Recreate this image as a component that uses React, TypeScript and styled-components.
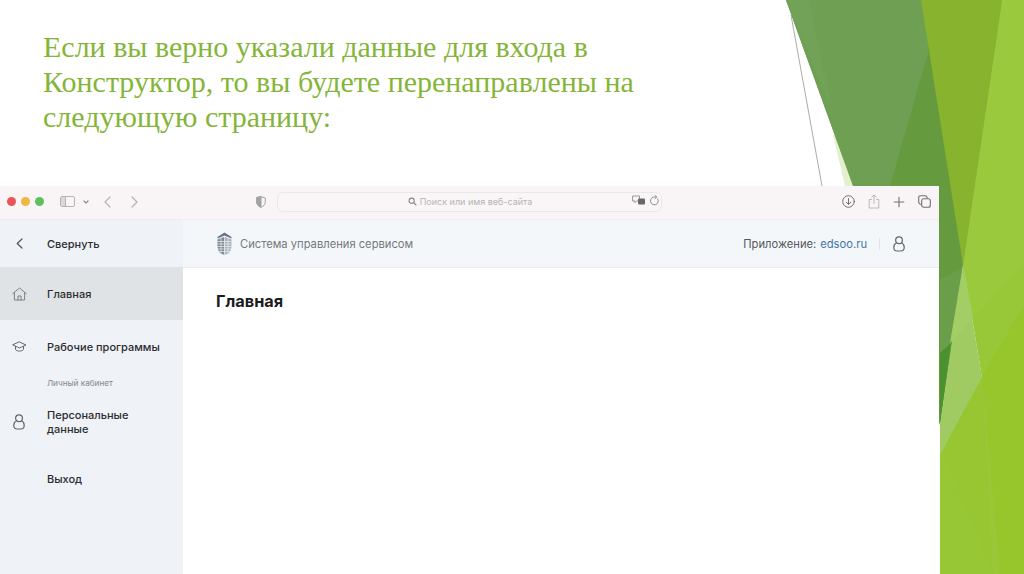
import React from "react";
import styled, { createGlobalStyle } from "styled-components";

const Global = createGlobalStyle`
  html, body { margin: 0; padding: 0; background: #fff; }
  #root { width: 1024px; height: 574px; overflow: hidden; }
`;

const Slide = styled.div`
  position: relative;
  width: 1024px;
  height: 574px;
  overflow: hidden;
  background: #fff;
  display: flex;
  flex-direction: column;
`;

const Decor = styled.svg`
  position: absolute;
  inset: 0;
  width: 1024px;
  height: 574px;
`;

const Heading = styled.h1`
  position: relative;
  box-sizing: border-box;
  margin: 0;
  height: 186px;
  width: 680px;
  padding: 29px 0 0 43px;
  font: 400 30px/35px "Liberation Serif", serif;
  color: #85b538;
`;

const BrowserWindow = styled.div`
  position: relative;
  width: 939px;
  height: 388px;
  display: flex;
  flex-direction: column;
  background: #fff;
  font-family: Inter, "Noto Sans", sans-serif;
`;

const Toolbar = styled.div`
  box-sizing: border-box;
  height: 34px;
  flex: none;
  display: flex;
  align-items: center;
  background: #f9f5f6;
  border-bottom: 1px solid #eceef0;
  padding: 0 0 2px 7px;
`;

const Lights = styled.div`
  display: flex;
  gap: 5px;
  margin-right: 16px;
`;

const Light = styled.span<{ $color: string }>`
  width: 9px;
  height: 9px;
  border-radius: 50%;
  background: ${(p) => p.$color};
`;

const ToolIcon = styled.svg<{ $ml?: number }>`
  flex: none;
  margin-left: ${(p) => p.$ml ?? 0}px;
  fill: none;
  stroke-linecap: round;
  stroke-linejoin: round;
`;

const AddressBar = styled.div`
  box-sizing: border-box;
  position: relative;
  width: 385px;
  height: 20px;
  margin-left: 11px;
  border: 1px solid #ebe8e9;
  border-radius: 6px;
  background: #faf6f7;
  display: flex;
  align-items: center;
  justify-content: center;
  gap: 3px;
  padding-left: 1px;
  font-size: 9px;
  color: #b4b4b6;
`;

const AddressTools = styled.div`
  position: absolute;
  right: 1px;
  top: 2px;
  display: flex;
  align-items: center;
  gap: 3px;
`;

const ToolbarRight = styled.div`
  margin-left: auto;
  margin-right: 8px;
  display: flex;
  align-items: center;
  gap: 13px;
`;

const Body = styled.div`
  flex: 1;
  display: flex;
  min-height: 0;
`;

const Sidebar = styled.nav`
  width: 183px;
  flex: none;
  background: #eff2f6;
  display: flex;
  flex-direction: column;
`;

const NavRow = styled.div<{ $h: number; $active?: boolean }>`
  height: ${(p) => p.$h}px;
  flex: none;
  display: flex;
  align-items: center;
  background: ${(p) => (p.$active ? "#dfe3e6" : "transparent")};
`;

const NavIconSlot = styled.div`
  width: 47px;
  flex: none;
  display: flex;
  justify-content: center;
  padding-right: 9px;
  box-sizing: border-box;
`;

const NavLabel = styled.span`
  font-size: 11px;
  line-height: 14px;
  font-weight: 500;
  color: #2b2d31;
`;

const SectionLabel = styled.div`
  height: 20px;
  flex: none;
  padding-left: 47px;
  font-size: 8.2px;
  line-height: 20px;
  color: #85888d;
`;

const Main = styled.main`
  flex: 1;
  display: flex;
  flex-direction: column;
`;

const TopBar = styled.header`
  box-sizing: border-box;
  height: 48px;
  flex: none;
  display: flex;
  align-items: center;
  padding: 0 34px 0 33px;
  background: #f4f7fa;
  border-bottom: 1px solid #e9ebee;
`;

const Brand = styled.span`
  margin-left: 7px;
  font-size: 11.2px;
  color: #76797d;
`;

const AppInfo = styled.div`
  margin-left: auto;
  display: flex;
  align-items: center;
  font-size: 11.2px;
  color: #55585c;
`;

const AppLink = styled.span`
  margin-left: 4px;
  color: #3f76a8;
`;

const Divider = styled.span`
  width: 1px;
  height: 12px;
  background: #dfe3e7;
  margin: 0 13px 0 12px;
`;

const PageTitle = styled.h2`
  margin: 24px 0 0 33px;
  font-size: 16.3px;
  line-height: 18px;
  font-weight: 700;
  color: #1b1c1e;
`;

const Person = ({ color = "#63666b" }: { color?: string }) => (
  <svg width="12" height="16" viewBox="0 0 12 16" fill="none" stroke={color} strokeWidth="1.2">
    <circle cx="6" cy="4.2" r="3.4" />
    <path d="M3.6 6.8C1.6 7.8.8 9.4.8 11.2.8 13.6 2.2 15 4.2 15h3.6c2 0 3.4-1.4 3.4-3.8 0-1.8-.8-3.4-2.8-4.4" />
  </svg>
);

const BuildingLogo = () => (
  <svg width="17" height="24" viewBox="0 0 17 24" fill="none">
    <path d="M8.5 .5 15.5 5V6.5L8.5 3.5 1.5 6.5V5Z" fill="#66717f" />
    <path d="M1.5 7.5 8.5 4.8V23L4 21Q1.5 18 1.5 14Z" fill="#7f8a97" />
    <path d="M8.5 4.8 15.5 7.5V14Q15.5 18 13 21L8.5 23Z" fill="#a9b2bc" />
    <path d="M1.5 9.5H15.5M1.5 12H15.5M1.5 14.5H15.5M2 17H15M3 19.5H14M8.5 5V23M5 6V21M12 6V21" stroke="#eef1f4" strokeWidth=".7" />
  </svg>
);

export default function App() {
  return (
    <Slide>
      <Global />
      <Decor viewBox="0 0 1024 574" aria-hidden="true">
        <polygon points="833,135 845,135 860,190 846,190" fill="#e3efcd" />
        <line x1="791" y1="15" x2="822" y2="186" stroke="#a9aca8" strokeWidth="1" />
        <polygon points="786,0 1004,0 940,425" fill="#659b3e" />
        <polygon points="786,0 930,0 928,53 890,186 853,186" fill="#6f9f52" />
        <polygon points="786,0 809,0 832,110" fill="#72a258" />
        <polygon points="940,280 966,265 951,343 940,353" fill="#6a9e4a" />
        <polygon points="940,353 951,343 940,425" fill="#4c9130" />
        <polygon points="921,0 1002,0 963,265" fill="#88b32f" />
        <polygon points="1002,0 1024,0 1024,574 940,574 940,455 982,377 963,265" fill="#9ac93e" />
        <polygon points="1024,265 1024,574 940,574 940,455 982,377 973,318" fill="#98c738" />
        <polygon points="982,377 993,574 940,574 940,447" fill="#97c632" />
        <polygon points="1024,305 1024,574 1000,574 982,377" fill="#96c52c" />
        <polygon points="940,447 993,574 940,574" fill="#98c736" />
        <polygon points="963,265 982,377 940,455 940,425" fill="#9fcb62" />
        <polygon points="963,265 973,318 950,343" fill="#a3ce66" />
      </Decor>

      <Heading>
        Если вы верно указали данные для входа в<br />
        Конструктор, то вы будете перенаправлены на<br />
        следующую страницу:
      </Heading>

      <BrowserWindow>
        <Toolbar>
          <Lights>
            <Light $color="#e9565a" />
            <Light $color="#f0b840" />
            <Light $color="#5cc15a" />
          </Lights>
          <ToolIcon width="15" height="11" viewBox="0 0 15 11" stroke="#b5b5b8" strokeWidth="1">
            <rect x=".5" y=".5" width="14" height="10" rx="1.5" />
            <path d="M5.5 .5V10.5" />
            <path d="M1 1h4v9H1z" fill="#d9d9db" stroke="none" />
          </ToolIcon>
          <ToolIcon $ml={8} width="6" height="4" viewBox="0 0 6 4" stroke="#8b8b8e" strokeWidth="1.2">
            <path d="M1 1 3 3 5 1" />
          </ToolIcon>
          <ToolIcon $ml={15} width="7" height="12" viewBox="0 0 7 12" stroke="#b3b3b6" strokeWidth="1.2">
            <path d="M6 1 1 6 6 11" />
          </ToolIcon>
          <ToolIcon $ml={20} width="7" height="12" viewBox="0 0 7 12" stroke="#b3b3b6" strokeWidth="1.2">
            <path d="M1 1 6 6 1 11" />
          </ToolIcon>
          <ToolIcon $ml={118} width="10" height="12" viewBox="0 0 10 12" stroke="#a3a3a6" strokeWidth="1">
            <path d="M5 .7 9.3 2V6C9.3 8.7 7.4 10.4 5 11.3 2.6 10.4.7 8.7.7 6V2Z" />
            <path d="M5 .7V11.3C2.6 10.4.7 8.7.7 6V2Z" fill="#a3a3a6" />
          </ToolIcon>
          <AddressBar>
            <ToolIcon width="9" height="9" viewBox="0 0 9 9" stroke="#85878a" strokeWidth="1.1">
              <circle cx="3.7" cy="3.7" r="2.6" />
              <path d="M5.7 5.7 8 8" />
            </ToolIcon>
            Поиск или имя веб-сайта
            <AddressTools>
              <ToolIcon width="14" height="11" viewBox="0 0 14 11" stroke="#8d8d90" strokeWidth=".9">
                <path d="M1 1h6.5v5H4.5L3 7.5V6H1z" />
                <rect x="6" y="3.5" width="7" height="6" rx="1" fill="#66686b" stroke="none" />
              </ToolIcon>
              <ToolIcon width="11" height="11" viewBox="0 0 11 11" stroke="#8d8d90" strokeWidth="1">
                <path d="M8.8 4A3.9 3.9 0 1 1 5.5 2H7.5M6 .5 7.7 2 6 3.5" />
              </ToolIcon>
            </AddressTools>
          </AddressBar>
          <ToolbarRight>
            <ToolIcon width="13" height="13" viewBox="0 0 13 13" stroke="#6f7073" strokeWidth="1">
              <circle cx="6.5" cy="6.5" r="5.8" />
              <path d="M6.5 3.5V9.3M4.2 7.2 6.5 9.4 8.8 7.2" />
            </ToolIcon>
            <ToolIcon width="12" height="15" viewBox="0 0 12 15" stroke="#b8b8ba" strokeWidth="1">
              <path d="M3.5 5.5H1.2V14H10.8V5.5H8.5M6 9.5V1M3.8 3 6 1 8.2 3" />
            </ToolIcon>
            <ToolIcon width="12" height="12" viewBox="0 0 12 12" stroke="#6f7073" strokeWidth="1.1">
              <path d="M6 1.2V10.8M1.2 6H10.8" />
            </ToolIcon>
            <ToolIcon width="13" height="13" viewBox="0 0 13 13" stroke="#6f7073" strokeWidth="1.1">
              <rect x="3.7" y="3.7" width="8.6" height="8.6" rx="2" />
              <path d="M2.7 9.2C1.3 9 .7 8.3.7 7V2.7C.7 1.4 1.4.7 2.7.7H7C8.3.7 9 1.3 9.2 2.7" />
            </ToolIcon>
          </ToolbarRight>
        </Toolbar>

        <Body>
          <Sidebar>
            <NavRow $h={47}>
              <NavIconSlot>
                <ToolIcon width="7" height="11" viewBox="0 0 7 11" stroke="#4f5256" strokeWidth="1.2">
                  <path d="M6 1 1.2 5.5 6 10" />
                </ToolIcon>
              </NavIconSlot>
              <NavLabel>Свернуть</NavLabel>
            </NavRow>
            <NavRow $h={53} $active>
              <NavIconSlot>
                <ToolIcon width="15" height="14" viewBox="0 0 15 14" stroke="#7c8084" strokeWidth="1">
                  <path d="M.8 6.6 7.5 1l6.7 5.6M2.4 5.6V13h10.2V5.6M6 13V9h3v4" />
                </ToolIcon>
              </NavIconSlot>
              <NavLabel>Главная</NavLabel>
            </NavRow>
            <NavRow $h={53}>
              <NavIconSlot>
                <ToolIcon width="15" height="12" viewBox="0 0 15 12" stroke="#65686c" strokeWidth="1">
                  <path d="M7.5 1 14 4 7.5 7 1 4Z" />
                  <path d="M3.5 5.4V8.5C4.8 10.6 10.2 10.6 11.5 8.5V5.4" />
                </ToolIcon>
              </NavIconSlot>
              <NavLabel>Рабочие программы</NavLabel>
            </NavRow>
            <SectionLabel>Личный кабинет</SectionLabel>
            <NavRow $h={58}>
              <NavIconSlot>
                <Person />
              </NavIconSlot>
              <NavLabel>
                Персональные
                <br />
                данные
              </NavLabel>
            </NavRow>
            <NavRow $h={56}>
              <NavIconSlot />
              <NavLabel>Выход</NavLabel>
            </NavRow>
          </Sidebar>

          <Main>
            <TopBar>
              <BuildingLogo />
              <Brand>Система управления сервисом</Brand>
              <AppInfo>
                Приложение:
                <AppLink>edsoo.ru</AppLink>
                <Divider />
                <Person />
              </AppInfo>
            </TopBar>
            <PageTitle>Главная</PageTitle>
          </Main>
        </Body>
      </BrowserWindow>
    </Slide>
  );
}
